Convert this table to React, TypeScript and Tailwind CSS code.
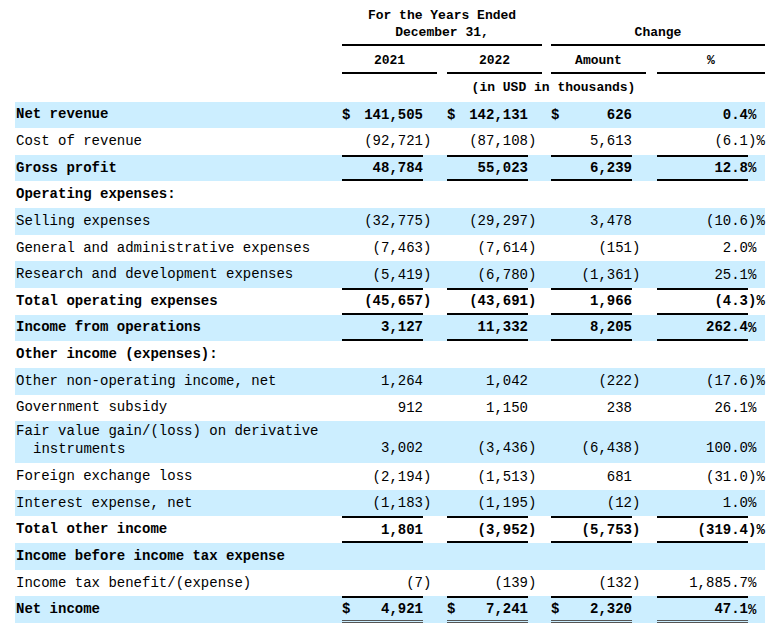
import React from 'react';

type Row = {
  label: string;
  vals?: string[];
  dollar?: boolean;
  bold?: boolean;
  band?: boolean;
  lines?: 'none' | 'top' | 'bottom' | 'both' | 'net';
  tall?: boolean;
};

const cols =
  'grid w-[750px] grid-cols-[327px_81px_14px_10px_81px_14px_9px_81px_14px_11px_91px_17px]';

const rows: Row[] = [
  { label: 'Net revenue', vals: ['141,505', '142,131', '626', '0.4%'], dollar: true, bold: true, band: true },
  { label: 'Cost of revenue', vals: ['(92,721)', '(87,108)', '5,613', '(6.1)%'] },
  { label: 'Gross profit', vals: ['48,784', '55,023', '6,239', '12.8%'], bold: true, band: true, lines: 'both' },
  { label: 'Operating expenses:', bold: true },
  { label: 'Selling expenses', vals: ['(32,775)', '(29,297)', '3,478', '(10.6)%'], band: true },
  { label: 'General and administrative expenses', vals: ['(7,463)', '(7,614)', '(151)', '2.0%'] },
  { label: 'Research and development expenses', vals: ['(5,419)', '(6,780)', '(1,361)', '25.1%'], band: true },
  { label: 'Total operating expenses', vals: ['(45,657)', '(43,691)', '1,966', '(4.3)%'], bold: true, lines: 'both' },
  { label: 'Income from operations', vals: ['3,127', '11,332', '8,205', '262.4%'], bold: true, band: true, lines: 'bottom' },
  { label: 'Other income (expenses):', bold: true },
  { label: 'Other non-operating income, net', vals: ['1,264', '1,042', '(222)', '(17.6)%'], band: true },
  { label: 'Government subsidy', vals: ['912', '1,150', '238', '26.1%'] },
  { label: 'Fair value gain/(loss) on derivative', vals: ['3,002', '(3,436)', '(6,438)', '100.0%'], band: true, tall: true },
  { label: 'Foreign exchange loss', vals: ['(2,194)', '(1,513)', '681', '(31.0)%'] },
  { label: 'Interest expense, net', vals: ['(1,183)', '(1,195)', '(12)', '1.0%'], band: true },
  { label: 'Total other income', vals: ['1,801', '(3,952)', '(5,753)', '(319.4)%'], bold: true, lines: 'both' },
  { label: 'Income before income tax expense', bold: true, band: true },
  { label: 'Income tax benefit/(expense)', vals: ['(7)', '(139)', '(132)', '1,885.7%'] },
  { label: 'Net income', vals: ['4,921', '7,241', '2,320', '47.1%'], dollar: true, bold: true, band: true, lines: 'net' },
];

function split(s: string): [string, string] {
  if (s.endsWith(')%')) return [s.slice(0, -2), ')%'];
  if (s.endsWith('%')) return [s.slice(0, -1), '%'];
  if (s.endsWith(')')) return [s.slice(0, -1), ')'];
  return [s, ''];
}

function lineClass(lines: Row['lines']) {
  if (lines === 'both') return 'border-t-2 border-b-2 border-black';
  if (lines === 'bottom') return 'border-b-2 border-black';
  if (lines === 'top') return 'border-t-2 border-black';
  if (lines === 'net')
    return 'border-t-2 border-t-black border-b-[3px] [border-bottom-style:double] border-b-[#555]';
  return '';
}

function DataRow({ row }: { row: Row }) {
  const align = row.tall ? 'items-end pb-[6px]' : 'items-center';
  return (
    <div
      className={`${cols} ${row.tall ? 'h-[42px]' : 'h-[26.65px]'} ${row.band ? 'bg-[#cceeff]' : ''} ${
        row.bold ? 'font-bold' : ''
      }`}
    >
      {row.tall ? (
        <div className="flex flex-col pl-px pt-px leading-[18px]">
          <span>{row.label}</span>
          <span className="pl-[17px]">instruments</span>
        </div>
      ) : (
        <div className="flex items-center pl-px whitespace-nowrap">{row.label}</div>
      )}
      {[0, 1, 2, 3].map((i) => {
        const raw = row.vals ? row.vals[i] : '';
        const [val, suf] = split(raw);
        const pre = row.dollar && i < 3 ? '$' : '';
        return (
          <React.Fragment key={i}>
            <div className={`flex justify-between leading-[18px] ${align} ${row.vals ? lineClass(row.lines) : ''}`}>
              <span>{pre}</span>
              <span>{val}</span>
            </div>
            <div className={`flex leading-[18px] ${align}`}>{suf}</div>
            {i < 3 && <div />}
          </React.Fragment>
        );
      })}
    </div>
  );
}

export default function App() {
  return (
    <div className="w-[782px] h-[638px] bg-white text-black font-['Liberation_Mono',monospace] text-[14px] pl-[15px] pt-[7px]">
      <div className={`${cols} font-bold text-[13px]`}>
        <div />
        <div className="col-span-5 text-center leading-[17px] pb-[3px] border-b-2 border-black">
          <div>For the Years Ended</div>
          <div>December 31,</div>
        </div>
        <div />
        <div className="col-span-5 self-end text-center leading-[17px] pb-[3px] border-b-2 border-black">
          Change
        </div>
      </div>
      <div className={`${cols} font-bold text-[13px] h-[28px]`}>
        <div />
        <div className="col-span-2 flex items-center justify-center pt-[3px] border-b-2 border-black">2021</div>
        <div />
        <div className="col-span-2 flex items-center justify-center pt-[3px] border-b-2 border-black">2022</div>
        <div />
        <div className="col-span-2 flex items-center justify-center pt-[3px] border-b-2 border-black">Amount</div>
        <div />
        <div className="col-span-2 flex items-center justify-center pt-[3px] border-b-2 border-black">%</div>
      </div>
      <div className={`${cols} font-bold text-[13px] h-[27.5px]`}>
        <div />
        <div className="col-span-11 flex items-center justify-center">(in USD in thousands)</div>
      </div>
      {rows.map((r) => (
        <DataRow key={r.label} row={r} />
      ))}
    </div>
  );
}
